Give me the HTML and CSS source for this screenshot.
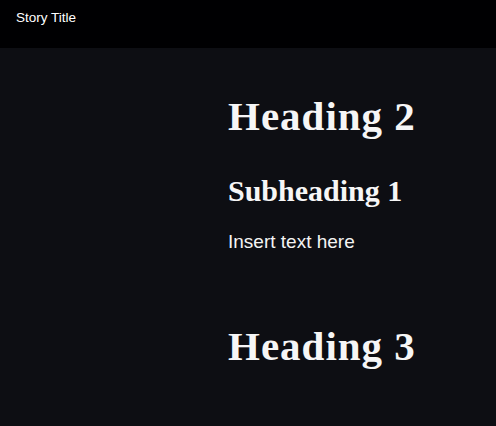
FILE: index.html
```html
<!DOCTYPE html>
<html lang="en">
<head>
<meta charset="utf-8">
<title>Story</title>
<link rel="stylesheet" href="styles.css">
</head>
<body>
<header class="topbar">
  <span class="story-title">Story Title</span>
</header>
<main class="layout">
  <aside class="sidebar"></aside>
  <article class="story">
    <h2 class="heading">Heading 2</h2>
    <h3 class="subheading">Subheading 1</h3>
    <p class="text">Insert text here</p>
    <h2 class="heading heading-next">Heading 3</h2>
  </article>
</main>
</body>
</html>
```

FILE: styles.css
```css
html, body {
  margin: 0;
  padding: 0;
  height: 100%;
}
body {
  background: #0d0e13;
  color: #f4f4f4;
  font-family: "Liberation Sans", Arial, sans-serif;
}
.topbar {
  height: 48px;
  background: #000002;
  box-sizing: border-box;
  padding: 8px 16px 0;
}
.story-title {
  font-size: 13.5px;
  line-height: 18px;
  color: #ffffff;
}
.layout {
  display: grid;
  grid-template-columns: 228px 1fr;
}
.story {
  padding-top: 44px;
}
.heading {
  margin: 0;
  font-family: "Liberation Serif", "Times New Roman", serif;
  font-weight: bold;
  font-size: 41px;
  letter-spacing: 1px;
  line-height: 48px;
  color: #f6f6f6;
}
.subheading {
  margin: 34px 0 0;
  font-family: "Liberation Serif", "Times New Roman", serif;
  font-weight: bold;
  font-size: 30px;
  line-height: 34px;
  color: #f6f6f6;
}
.text {
  margin: 22px 0 0;
  font-size: 19px;
  line-height: 24px;
}
.heading-next {
  margin-top: 68px;
}
```
